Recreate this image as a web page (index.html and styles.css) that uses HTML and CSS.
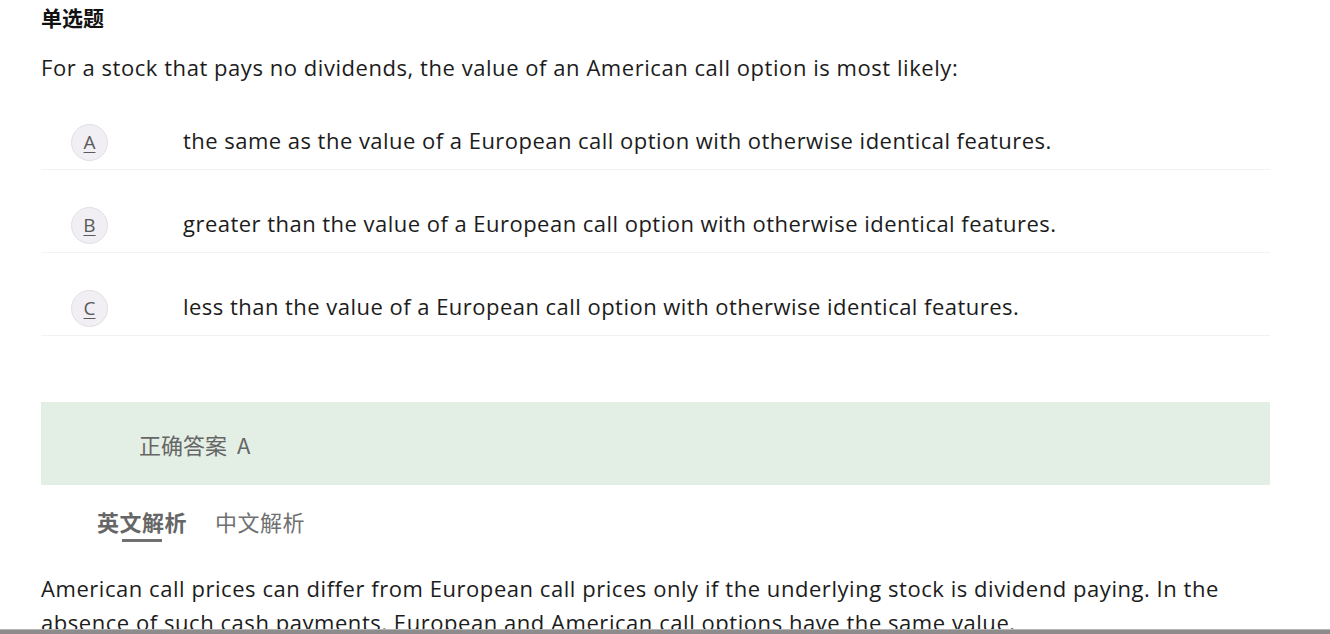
FILE: index.html
```html
<!DOCTYPE html>
<html lang="zh">
<head>
<meta charset="utf-8">
<link rel="stylesheet" href="styles.css">
</head>
<body>
<main class="page">
  <h1 class="qtype">单选题</h1>
  <p class="stem">For a stock that pays no dividends, the value of an American call option is most likely:</p>
  <ul class="options">
    <li class="option"><span class="letter">A</span><span class="otext">the same as the value of a European call option with otherwise identical features.</span></li>
    <li class="option"><span class="letter">B</span><span class="otext">greater than the value of a European call option with otherwise identical features.</span></li>
    <li class="option"><span class="letter">C</span><span class="otext">less than the value of a European call option with otherwise identical features.</span></li>
  </ul>
  <div class="answer">正确答案 A</div>
  <div class="tabs">
    <span class="tab active">英文解析</span>
    <span class="tab">中文解析</span>
  </div>
  <p class="explain">American call prices can differ from European call prices only if the underlying stock is dividend paying. In the absence of such cash payments, European and American call options have the same value.</p>
</main>
<div class="hbar"></div>
</body>
</html>
```

FILE: styles.css
```css
html, body {
  margin: 0;
  padding: 0;
  background: #fff;
  overflow: hidden;
}
body {
  font-family: "Open Sans", "Noto Sans", "Noto Sans CJK SC", sans-serif;
  color: #1c1c1c;
}
.page {
  width: 1229px;
  margin-left: 41px;
}
.qtype {
  margin: 0;
  padding-top: 3px;
  height: 28px;
  font-size: 21px;
  line-height: 28px;
  font-weight: 700;
  color: #111;
  font-family: "Noto Sans CJK SC", sans-serif;
}
.stem {
  margin: 0;
  padding-top: 21px;
  font-size: 22px;
  line-height: 30px;
  letter-spacing: 0.55px;
}
.options {
  list-style: none;
  margin: 5px 0 0;
  padding: 0;
}
.option {
  display: flex;
  align-items: center;
  height: 36px;
  padding: 37px 0 9px;
  border-bottom: 1px solid #f2f2f2;
}
.letter {
  flex: none;
  width: 37px;
  height: 37px;
  margin-left: 30px;
  border-radius: 50%;
  background: #f1eff3;
  border: 1px solid #e2dfe4;
  box-sizing: border-box;
  display: flex;
  align-items: center;
  justify-content: center;
  font-size: 19px;
  color: #5a5a5a;
  text-decoration: underline;
  text-underline-offset: 3px;
  text-decoration-thickness: 1px;
}
.otext {
  margin-left: 75px;
  margin-top: -4px;
  font-size: 22px;
  letter-spacing: 0.47px;
}
.answer {
  margin-top: 66px;
  height: 83px;
  background: #e3efe5;
  display: flex;
  align-items: center;
  padding-left: 98px;
  font-size: 22px;
  word-spacing: 5px;
  color: #666;
  font-family: "Noto Sans CJK SC", sans-serif;
}
.tabs {
  display: flex;
  gap: 28px;
  padding-left: 56px;
  margin-top: 20px;
  font-family: "Noto Sans CJK SC", sans-serif;
  font-size: 22px;
  line-height: 32px;
  letter-spacing: 0.5px;
  color: #707070;
}
.tab {
  position: relative;
  padding-bottom: 10px;
}
.tab.active {
  font-weight: 700;
  color: #666;
}
.tab.active::after {
  content: "";
  position: absolute;
  left: 25px;
  width: 40px;
  bottom: 5px;
  height: 3px;
  background: #707070;
}
.explain {
  margin: 0;
  max-width: 1200px;
  padding-top: 24px;
  font-size: 22px;
  line-height: 34px;
  letter-spacing: 0.55px;
}
.hbar {
  position: fixed;
  left: 0;
  right: 0;
  bottom: 0;
  height: 4px;
  background: #8c8c8c;
  border-top: 1px solid #b5b5b5;
}
```
